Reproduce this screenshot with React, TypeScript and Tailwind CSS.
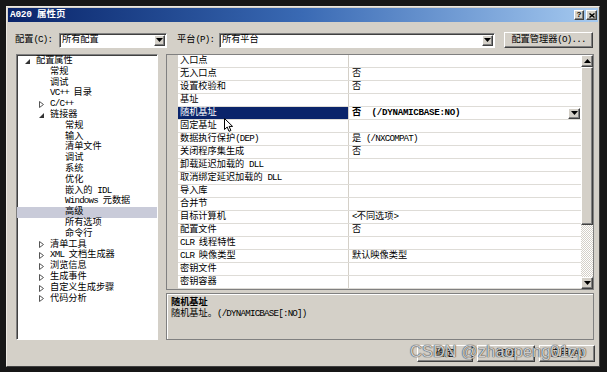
import React from 'react';

const raised =
  'bg-[#d4d0c8] border border-t-white border-l-white border-r-[#404040] border-b-[#404040] shadow-[inset_-1px_-1px_0_#808080]';
const sunken =
  'border border-t-[#808080] border-l-[#808080] border-r-white border-b-white shadow-[inset_1px_1px_0_#404040]';

// SimSun-like look: narrow latin runs, full-width CJK
function T({ s, bold }: { s: string; bold?: boolean }) {
  const parts = s.split(/([\x20-\x7e]+)/).filter(Boolean);
  return (
    <>
      {parts.map((p, i) =>
        /^[\x20-\x7e]+$/.test(p) ? (
          <span key={i} className={bold ? 'tracking-[-0.3px]' : 'tracking-[-0.8px]'}>
            {p}
          </span>
        ) : (
          <span key={i}>{p}</span>
        )
      )}
    </>
  );
}

function DownArrow() {
  return (
    <svg width="7" height="4" viewBox="0 0 7 4">
      <path d="M0 0h7L3.5 4z" fill="#000" />
    </svg>
  );
}

function UpArrow() {
  return (
    <svg width="7" height="4" viewBox="0 0 7 4">
      <path d="M0 4h7L3.5 0z" fill="#000" />
    </svg>
  );
}

function Combo({ text, width }: { text: string; width: string }) {
  return (
    <div className={`${width} h-[15px] bg-white flex items-center ${sunken}`}>
      <span className="flex-1 pl-[2px] whitespace-pre">
        <T s={text} />
      </span>
      <div className={`w-[11px] h-[11px] mr-[1px] flex items-center justify-center ${raised}`}>
        <DownArrow />
      </div>
    </div>
  );
}

type Node = [number, string, 'open' | 'closed' | null, boolean?];

const tree: Node[] = [
  [0, '配置属性', 'open'],
  [1, '常规', null],
  [1, '调试', null],
  [1, 'VC++ 目录', null],
  [1, 'C/C++', 'closed'],
  [1, '链接器', 'open'],
  [2, '常规', null],
  [2, '输入', null],
  [2, '清单文件', null],
  [2, '调试', null],
  [2, '系统', null],
  [2, '优化', null],
  [2, '嵌入的 IDL', null],
  [2, 'Windows 元数据', null],
  [2, '高级', null, true],
  [2, '所有选项', null],
  [2, '命令行', null],
  [1, '清单工具', 'closed'],
  [1, 'XML 文档生成器', 'closed'],
  [1, '浏览信息', 'closed'],
  [1, '生成事件', 'closed'],
  [1, '自定义生成步骤', 'closed'],
  [1, '代码分析', 'closed'],
];

const indent = ['pl-[8px]', 'pl-[22px]', 'pl-[37px]'];

const props: [string, string, boolean?][] = [
  ['入口点', ''],
  ['无入口点', '否'],
  ['设置校验和', '否'],
  ['基址', ''],
  ['随机基址', '否  (/DYNAMICBASE:NO)', true],
  ['固定基址', ''],
  ['数据执行保护(DEP)', '是 (/NXCOMPAT)'],
  ['关闭程序集生成', '否'],
  ['卸载延迟加载的 DLL', ''],
  ['取消绑定延迟加载的 DLL', ''],
  ['导入库', ''],
  ['合并节', ''],
  ['目标计算机', '<不同选项>'],
  ['配置文件', '否'],
  ['CLR 线程特性', ''],
  ['CLR 映像类型', '默认映像类型'],
  ['密钥文件', ''],
  ['密钥容器', ''],
];

function TreeArrow({ kind }: { kind: 'open' | 'closed' | null }) {
  if (kind === 'open')
    return (
      <svg width="5" height="5" viewBox="0 0 5 5">
        <path d="M5 0V5H0z" fill="#333" />
      </svg>
    );
  if (kind === 'closed')
    return (
      <svg width="5" height="7" viewBox="0 0 5 7">
        <path d="M0.5 0.5L4.5 3.5L0.5 6.5z" fill="none" stroke="#555" strokeWidth="1" />
      </svg>
    );
  return null;
}

export default function App() {
  return (
    <div className="w-[607px] h-[372px] bg-[#171717] overflow-hidden pt-[6px] pl-[6px] font-['Liberation_Mono','Noto_Sans_CJK_SC',monospace] text-[9.2px] text-black relative">
      <div className="w-[594px] h-[361px] bg-[#d4d0c8] border border-t-[#ece9e2] border-l-[#ece9e2] border-r-[#404040] border-b-[#404040] p-[1px] flex flex-col">
        {/* title bar */}
        <div className="h-[14px] bg-linear-to-r from-[#0a246a] via-[#3a6ab4] to-[#a6caf0] flex items-center pl-[2px] pr-[1px]">
          <span className="flex-1 text-white font-bold text-[9.5px] leading-[14px] whitespace-pre">
            <T s="A020 属性页" bold />
          </span>
          <div className={`w-[10px] h-[10px] flex items-center justify-center ${raised}`}>
            <span className="font-['Liberation_Sans'] font-bold text-[8px] leading-none">?</span>
          </div>
          <div className={`w-[11px] h-[10px] ml-[2px] flex items-center justify-center ${raised}`}>
            <svg width="6" height="5" viewBox="0 0 6 5">
              <path d="M0.5 0.5L5.5 4.5M5.5 0.5L0.5 4.5" stroke="#000" strokeWidth="1.4" />
            </svg>
          </div>
        </div>

        {/* config row */}
        <div className="mt-[10px] h-[16px] flex items-center pl-[7px]">
          <span className="w-[44px] whitespace-pre">
            <T s="配置(C):" />
          </span>
          <Combo text="所有配置" width="w-[108px]" />
          <span className="w-[42px] ml-[10px] whitespace-pre">
            <T s="平台(P):" />
          </span>
          <Combo text="所有平台" width="w-[276px]" />
          <div className={`w-[89px] h-[16px] ml-[9px] flex items-center justify-center whitespace-pre ${raised}`}>
            <T s="配置管理器(O)..." />
          </div>
        </div>

        {/* main area */}
        <div className="mt-[6px] flex ml-[8px]">
          <div className={`w-[142px] h-[286px] bg-white pt-[1px] overflow-hidden ${sunken}`}>
            {tree.map(([lvl, label, arrow, sel], i) => (
              <div
                key={i}
                className={`flex items-center h-[10.8px] leading-[10.8px] ${indent[lvl]} ${sel ? 'bg-[#c9cbd9]' : ''}`}
              >
                <span className="w-[11px] flex items-center">
                  <TreeArrow kind={arrow} />
                </span>
                <span className="whitespace-pre">
                  <T s={label} />
                </span>
              </div>
            ))}
          </div>

          <div className="w-[428px] ml-[8px] flex flex-col">
            {/* property grid */}
            <div className="h-[236px] border border-[#808080] bg-white flex relative">
              <div className="w-[11px] bg-[#d4d0c8]" />
              <div className="w-[403px] flex flex-col">
                {props.map(([name, val, sel], i) => (
                  <div key={i} className="flex h-[13px] border-b border-[#dedcd7] leading-[12px]">
                    <div
                      className={`w-[171px] pl-[2px] border-r border-[#d4d0c8] whitespace-pre ${sel ? 'bg-[#0a246a] text-white' : ''}`}
                    >
                      <T s={name} />
                    </div>
                    <div className="flex-1 pl-[3px] flex items-center whitespace-pre">
                      <span className={`flex-1 ${sel ? 'font-bold' : ''}`}>
                        <T s={val} bold={sel} />
                      </span>
                      {sel && (
                        <div className={`w-[12px] h-[11px] mr-[1px] flex items-center justify-center ${raised}`}>
                          <DownArrow />
                        </div>
                      )}
                    </div>
                  </div>
                ))}
              </div>
              {/* scrollbar */}
              <div className="w-[12px] flex flex-col">
                <div className={`h-[12px] flex items-center justify-center ${raised}`}>
                  <UpArrow />
                </div>
                <div className={`h-[158px] ${raised}`} />
                <div className="flex-1 bg-[repeating-conic-gradient(#ffffff_0_25%,#d4d0c8_0_50%)] [background-size:2px_2px]" />
                <div className={`h-[12px] flex items-center justify-center ${raised}`}>
                  <DownArrow />
                </div>
              </div>
              {/* mouse cursor */}
              <svg className="absolute left-[57px] top-[63px]" width="10" height="15" viewBox="0 0 10 15">
                <path
                  d="M0.5 0.5V11.5L3.2 9L5 13.3L6.9 12.5L5.1 8.4H8.6Z"
                  fill="#fff"
                  stroke="#000"
                  strokeWidth="1"
                  strokeLinejoin="round"
                />
              </svg>
            </div>

            {/* description */}
            <div className="h-[47px] mt-[3px] border border-[#808080] shadow-[inset_1px_1px_0_#ffffff] pl-[4px] pt-[3px] leading-[11px] whitespace-pre">
              <div className="font-bold">
                <T s="随机基址" bold />
              </div>
              <div>
                <T s="随机基址。(/DYNAMICBASE[:NO])" />
              </div>
            </div>
          </div>
        </div>

        {/* buttons */}
        <div className="mt-[5px] flex justify-end gap-[4px] pr-[3px]">
          {[
            ['确定', 'w-[56px]'],
            ['取消', 'w-[58px]'],
            ['应用(A)', 'w-[56px]'],
          ].map(([t, w]) => (
            <div key={t} className={`${w} h-[17px] flex items-center justify-center whitespace-pre ${raised}`}>
              <T s={t} />
            </div>
          ))}
        </div>
      </div>

      {/* CSDN watermark laid over the dialog buttons */}
      <div className="absolute left-[410px] top-[341px] font-['Liberation_Sans',sans-serif] text-[16.5px] leading-[20px] text-white/75 [text-shadow:0_0_1px_#333,0_0_1px_#333] whitespace-pre">
        CSDN @zhaopeng01zp
      </div>
    </div>
  );
}
